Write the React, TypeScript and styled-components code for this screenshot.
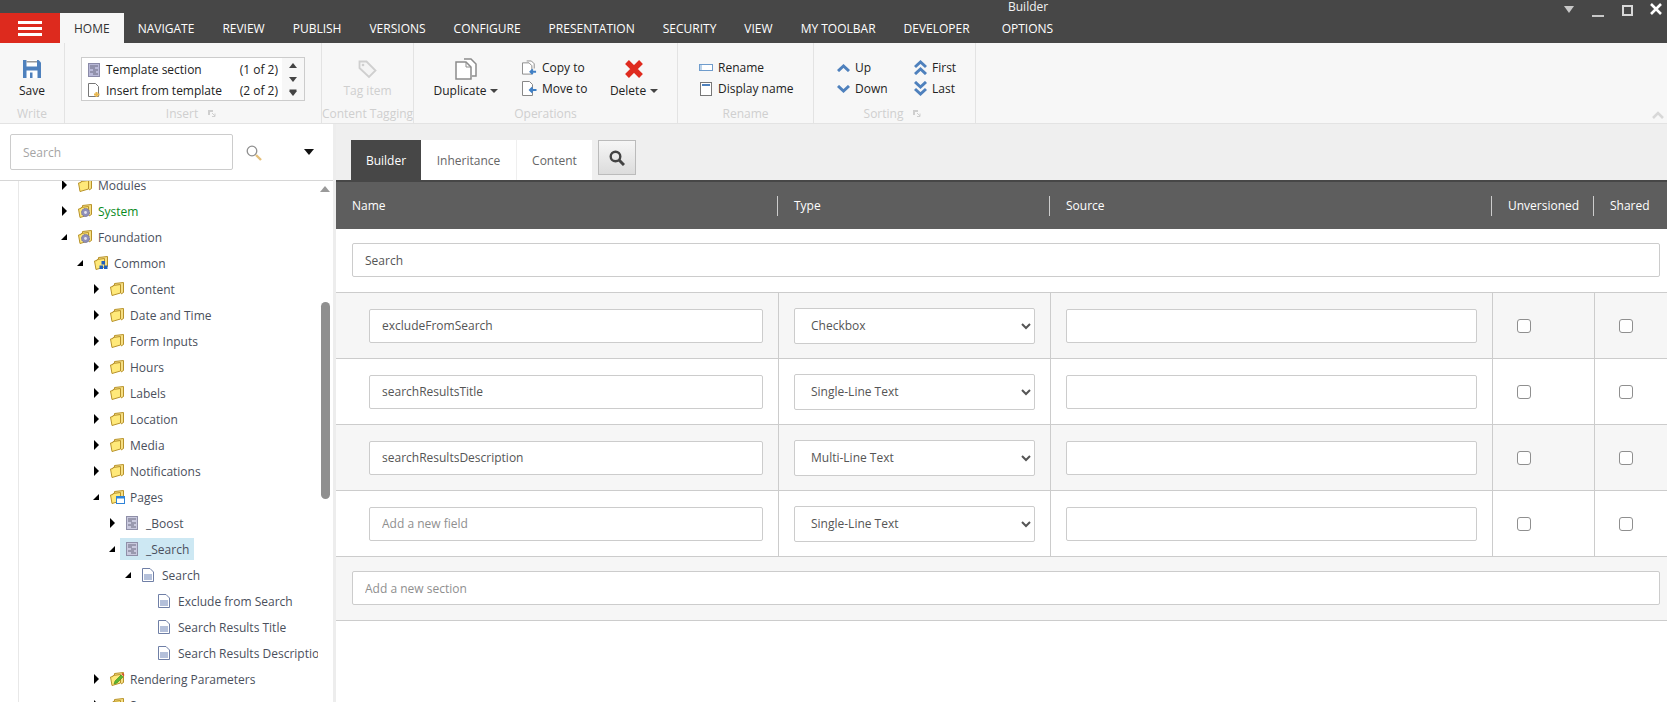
import React from "react";
import styled, { createGlobalStyle } from "styled-components";

const GlobalStyle = createGlobalStyle`
  html, body {
    margin: 0;
    padding: 0;
    height: 100%;
    overflow: hidden;
    background: #fff;
  }
  body {
    font-family: "Open Sans", "Liberation Sans", sans-serif;
    font-size: 12px;
    color: #333;
  }
  * { box-sizing: border-box; }
`;

/* ---------- icons ---------- */

const SaveIcon = () => (
  <svg width="18" height="18" viewBox="0 0 18 18">
    <path d="M0 0h15.500l2.500 2.500V18H0z" fill="#4f81bd" />
    <rect x="3.500" y="0" width="10.500" height="6.500" fill="#fff" />
    <rect x="3.500" y="1" width="10.500" height="1.500" fill="#9a9a9a" />
    <rect x="3.500" y="10.500" width="11" height="7.500" fill="#fff" />
    <rect x="7" y="12.500" width="2.500" height="5.500" fill="#4f81bd" />
  </svg>
);

const TemplateIcon = () => (
  <svg width="12" height="14" viewBox="0 0 12 14">
    <rect x="0.5" y="0.5" width="11" height="13" fill="#b9b9d8" stroke="#8a8aa8" />
    <path d="M2 3h8M2 5h5M5 7h5M2 9h6M5 11h5" stroke="#6b6b80" fill="none" />
  </svg>
);

const InsertIcon = () => (
  <svg width="12" height="15" viewBox="0 0 12 15">
    <path d="M0.5 0.5h7l3 3v10h-10z" fill="#fff" stroke="#777" />
    <path d="M8.500 9v5M6 11.500h5.500" stroke="#e8b64c" strokeWidth="2" />
  </svg>
);

const TagIcon = () => (
  <svg width="20" height="20" viewBox="0 0 20 20">
    <path d="M1.500 2.500h7l9 9-6.500 6.500-9.500-9z" fill="#f4f4f4" stroke="#cfcfcf" strokeWidth="1.800" />
    <circle cx="5" cy="6" r="1.300" fill="#cfcfcf" />
  </svg>
);

const DuplicateIcon = () => (
  <svg width="22" height="22" viewBox="0 0 22 22">
    <path d="M9 1h7l5 5v12h-4" fill="#fff" stroke="#8c8c8c" strokeWidth="1.500" />
    <path d="M1 4h10l5 5v12H1z" fill="#fff" stroke="#8c8c8c" strokeWidth="1.500" />
    <path d="M11 4v5h5" fill="none" stroke="#8c8c8c" />
  </svg>
);

const CopyToIcon = () => (
  <svg width="16" height="16" viewBox="0 0 16 16">
    <path d="M5 0.5h5l3 3v5" fill="#fff" stroke="#888" />
    <path d="M0.5 2.500h7l3 3v9h-10z" fill="#fff" stroke="#888" />
    <path d="M15 12H9M11.500 9.500L9 12l2.500 2.500" fill="none" stroke="#3f7fc4" strokeWidth="2" />
  </svg>
);

const MoveToIcon = () => (
  <svg width="15" height="15" viewBox="0 0 15 15">
    <path d="M0.5 0.5h7l3 3v11h-10z" fill="#fff" stroke="#888" />
    <path d="M14.500 9H8M10.500 6.500L8 9l2.500 2.500" fill="none" stroke="#3f7fc4" strokeWidth="2" />
  </svg>
);

const DeleteIcon = () => (
  <svg width="20" height="20" viewBox="0 0 20 20">
    <path d="M3 3l14 14M17 3L3 17" stroke="#df2b1f" strokeWidth="5.400" />
  </svg>
);

const RenameIcon = () => (
  <svg width="14" height="8" viewBox="0 0 14 8">
    <rect x="0.5" y="0.5" width="13" height="6" fill="#fff" stroke="#6f9ccc" />
    <rect x="1" y="1" width="2" height="5" fill="#bcd3ea" />
  </svg>
);

const DisplayNameIcon = () => (
  <svg width="12" height="14" viewBox="0 0 12 14">
    <rect x="0.5" y="0.5" width="11" height="13" fill="#fff" stroke="#777" />
    <rect x="2" y="2" width="8" height="2" fill="#4f81bd" />
  </svg>
);

const ChevronIcon = ({ down, double }: { down?: boolean; double?: boolean }) => (
  <svg width="13" height={double ? 15 : 8} viewBox={double ? "0 0 13 15" : "0 0 13 8"}>
    <g
      fill="none"
      stroke="#4f81bd"
      strokeWidth="3"
      transform={down ? `rotate(180 6.5 ${double ? 7.5 : 4})` : undefined}
    >
      <path d="M1 7l5.500-5L12 7" />
      {double && <path d="M1 14l5.500-5L12 14" />}
    </g>
  </svg>
);

const LauncherIcon = () => (
  <svg width="8" height="7" viewBox="0 0 8 7">
    <path d="M0 0h5v2H2v3H0z" fill="#cfcfcf" />
    <path d="M4 3l3 3M7 3.500V6.500H4" stroke="#cfcfcf" fill="none" />
  </svg>
);

const MagnifierIcon = () => (
  <svg width="16" height="16" viewBox="0 0 16 16">
    <circle cx="6" cy="6" r="4.800" fill="#fff" stroke="#8f8f8f" strokeWidth="1.300" />
    <path d="M10 10l5 5" stroke="#e5c07b" strokeWidth="2.400" />
  </svg>
);

const FindIcon = () => (
  <svg width="16" height="16" viewBox="0 0 16 16">
    <circle cx="6.500" cy="6.500" r="4.800" fill="none" stroke="#444" strokeWidth="2.400" />
    <path d="M10 10l5 5" stroke="#444" strokeWidth="3" />
  </svg>
);

type Badge = "none" | "gear" | "cubes" | "window" | "pencil";

const FolderIcon = ({ badge = "none" }: { badge?: Badge }) => (
  <svg width="15" height="14" viewBox="0 0 15 14">
    <path d="M4.500 3V1.500L13.500 0.500V10.500L11 12" fill="#f6df84" stroke="#b8922a" />
    <path d="M0.500 5L3 4.500V3.500L10.500 2.500V11L2 13.500Z" fill="#ffe97a" stroke="#b8922a" />
    {badge === "gear" && (
      <>
        <circle cx="7.500" cy="8.500" r="4" fill="#8f8fb8" stroke="#74749a" strokeDasharray="1.600 0.800" />
        <circle cx="7.500" cy="8.500" r="1.400" fill="#e4e4f0" />
      </>
    )}
    {badge === "cubes" && (
      <>
        <rect x="7.500" y="5" width="3.500" height="3.500" fill="#1f5fbf" />
        <rect x="5.500" y="9.500" width="3.500" height="3.500" fill="#1f5fbf" />
        <rect x="10" y="9.500" width="3.500" height="3.500" fill="#1f5fbf" />
      </>
    )}
    {badge === "window" && (
      <>
        <rect x="6.500" y="6.500" width="8" height="7" fill="#fff" stroke="#2f83d8" />
        <rect x="6.500" y="6.500" width="8" height="2" fill="#2f83d8" />
      </>
    )}
    {badge === "pencil" && (
      <>
        <path d="M4 12l1-3 6-6 2 2-6 6z" fill="#5cb531" stroke="#3c8a1c" strokeWidth="0.600" />
        <path d="M11.500 2l1-1 2 2-1 1z" fill="#d9402e" />
      </>
    )}
  </svg>
);

const DocIcon = () => (
  <svg width="12" height="14" viewBox="0 0 12 14">
    <path d="M0.5 0.5h7.500l3.500 3.500v9.500h-11z" fill="#fff" stroke="#6f7fa6" />
    <rect x="2" y="6" width="8" height="6" fill="#b4c0da" />
  </svg>
);

const TemplateTreeIcon = () => (
  <svg width="12" height="14" viewBox="0 0 12 14">
    <rect x="0.5" y="0.5" width="11" height="13" fill="#c9c9de" stroke="#8f8fa8" />
    <path d="M2 3h8M2 5h4M5 7h5M2 9h6M5 11h5" stroke="#6b6b80" fill="none" />
  </svg>
);

/* ---------- top bar ---------- */

const Page = styled.div`
  width: 1667px;
  height: 702px;
  display: flex;
  flex-direction: column;
  overflow: hidden;
`;

const TopBar = styled.header`
  height: 43px;
  flex: none;
  background: #474747;
  color: #fff;
`;

const TitleRow = styled.div`
  height: 13px;
  display: flex;
  align-items: flex-start;
  padding-left: 1008px;
`;

const WindowTitle = styled.span`
  line-height: 13px;
  color: #f2f2f2;
`;

const WindowControls = styled.div`
  margin-left: auto;
  display: flex;
  align-items: flex-start;
  padding: 3px 5px 0 0;
`;

const WindowButton = styled.svg<{ $gap?: number; $top?: number }>`
  display: block;
  margin-left: ${(p) => p.$gap ?? 0}px;
  margin-top: ${(p) => p.$top ?? 0}px;
`;

const TabRow = styled.nav`
  height: 30px;
  display: flex;
  align-items: stretch;
`;

const MenuButton = styled.button`
  width: 60px;
  border: 0;
  padding: 0;
  background: #dd2a1e;
  display: flex;
  flex-direction: column;
  align-items: center;
  justify-content: center;
  gap: 3px;
`;

const MenuLine = styled.span`
  display: block;
  width: 24px;
  height: 3px;
  background: #fff;
`;

const RibbonTab = styled.div<{ $active?: boolean }>`
  padding: 0 14px;
  display: flex;
  align-items: center;
  white-space: nowrap;
  background: ${(p) => (p.$active ? "#f7f7f7" : "transparent")};
  color: ${(p) => (p.$active ? "#333" : "#fff")};
`;

const OptionsTab = styled(RibbonTab)`
  margin-left: 4px;
`;

/* ---------- ribbon ---------- */

const Ribbon = styled.section`
  height: 81px;
  flex: none;
  display: flex;
  position: relative;
  background: #f7f7f7;
  border-bottom: 1px solid #e3e3e3;
`;

const Group = styled.div<{ $width: number }>`
  width: ${(p) => p.$width}px;
  flex: none;
  display: flex;
  flex-direction: column;
  border-right: 1px solid #e3e3e3;
`;

const GroupBody = styled.div<{ $pad?: number }>`
  height: 61px;
  flex: none;
  display: flex;
  padding-left: ${(p) => p.$pad ?? 0}px;
`;

const GroupLabel = styled.div<{ $launcher?: boolean }>`
  display: flex;
  justify-content: center;
  align-items: center;
  gap: 10px;
  height: 18px;
  padding-right: ${(p) => (p.$launcher ? 4 : 0)}px;
  color: #cfcfcf;
  white-space: nowrap;
`;

const LargeButton = styled.div<{ $muted?: boolean; $iconTop: number; $width: number }>`
  width: ${(p) => p.$width}px;
  flex: none;
  display: flex;
  flex-direction: column;
  align-items: center;
  padding-top: ${(p) => p.$iconTop}px;
  color: ${(p) => (p.$muted ? "#cfcfcf" : "#222")};
  white-space: nowrap;
`;

const LargeIcon = styled.div<{ $height?: number }>`
  height: ${(p) => p.$height ?? 22}px;
  display: flex;
  align-items: flex-start;
`;

const LargeText = styled.div`
  display: flex;
  align-items: center;
  gap: 4px;
  line-height: 16px;
  margin-top: 1px;
`;

const Caret = styled.span`
  display: inline-block;
  border-left: 4px solid transparent;
  border-right: 4px solid transparent;
  border-top: 4px solid #444;
`;

const Gallery = styled.div`
  margin: 14px 0 0 16px;
  width: 224px;
  height: 44px;
  display: flex;
  background: #fff;
  border: 1px solid #ccc;
`;

const GalleryList = styled.div`
  flex: 1;
  padding: 1px 0 0 6px;
`;

const GalleryItem = styled.div`
  height: 21px;
  display: flex;
  align-items: center;
  gap: 6px;
  color: #222;
`;

const GalleryCount = styled.span`
  margin-left: auto;
  padding-right: 4px;
`;

const GalleryArrows = styled.div`
  width: 22px;
  flex: none;
  background: #f7f7f7;
  display: flex;
  flex-direction: column;
  align-items: center;
  gap: 9px;
  padding-top: 5px;
`;

const SmallArrow = styled.span<{ $down?: boolean }>`
  display: block;
  border-left: 4px solid transparent;
  border-right: 4px solid transparent;
  ${(p) => (p.$down ? "border-top: 5px solid #444;" : "border-bottom: 5px solid #444;")}
`;

const MoreArrow = styled(SmallArrow)`
  box-shadow: 0 -2px 0 -0.500px #444;
`;

const SmallColumn = styled.div<{ $width?: number; $ml?: number }>`
  width: ${(p) => (p.$width ? `${p.$width}px` : "auto")};
  margin-left: ${(p) => p.$ml ?? 0}px;
  flex: none;
  padding-top: 14px;
`;

const SmallButton = styled.div<{ $iconWidth?: number }>`
  height: 21px;
  display: flex;
  align-items: center;
  gap: 5px;
  color: #222;
  white-space: nowrap;
  & > span:first-child {
    width: ${(p) => p.$iconWidth ?? 14}px;
    display: flex;
    justify-content: center;
    flex: none;
  }
`;

const CollapseRibbon = styled.svg`
  position: absolute;
  right: 3px;
  bottom: 4px;
`;

/* ---------- main ---------- */

const Main = styled.main`
  flex: 1;
  min-height: 0;
  display: flex;
`;

const LeftPanel = styled.aside`
  width: 333px;
  flex: none;
  display: flex;
  flex-direction: column;
  background: #fff;
`;

const TreeSearch = styled.div`
  height: 57px;
  flex: none;
  display: flex;
  align-items: flex-start;
  padding: 10px 0 0 10px;
  border-bottom: 1px solid #d6d6d6;
`;

const TreeSearchInput = styled.input`
  width: 223px;
  height: 36px;
  padding: 0 12px;
  border: 1px solid #ccc;
  border-radius: 2px;
  font: 12px "Open Sans", sans-serif;
  outline: none;
  &::placeholder { color: #a5a5a5; }
`;

const TreeSearchIcon = styled.span`
  margin: 11px 0 0 13px;
  line-height: 0;
`;

const TreeSearchCaret = styled.span`
  margin: 15px 0 0 42px;
  border-left: 5px solid transparent;
  border-right: 5px solid transparent;
  border-top: 6px solid #111;
`;

const TreeArea = styled.div`
  flex: 1;
  min-height: 0;
  display: flex;
  margin-left: 18px;
  border-left: 1px solid #e8e8e8;
`;

const TreeClip = styled.div`
  width: 299px;
  flex: none;
  overflow: hidden;
`;

const TreeList = styled.ul`
  list-style: none;
  margin: -9px 0 0;
  padding: 0;
  width: 400px;
`;

const TreeRow = styled.li<{ $level: number }>`
  height: 26px;
  display: flex;
  align-items: center;
  padding-left: ${(p) => 43 + p.$level * 16}px;
  white-space: nowrap;
`;

const Toggle = styled.span`
  width: 16px;
  flex: none;
  display: flex;
  align-items: center;
`;

const ClosedArrow = styled.span`
  border-top: 5px solid transparent;
  border-bottom: 5px solid transparent;
  border-left: 5px solid #000;
`;

const OpenArrow = styled.span`
  border-left: 6px solid transparent;
  border-bottom: 6px solid #000;
  margin-left: -1px;
`;

const NodeBody = styled.span<{ $selected?: boolean }>`
  height: 22px;
  display: flex;
  align-items: center;
  margin-left: -6px;
  padding: 0 5px 0 6px;
  background: ${(p) => (p.$selected ? "#cde8f3" : "transparent")};
`;

const NodeIcon = styled.span`
  width: 20px;
  flex: none;
  display: flex;
  align-items: center;
`;

const NodeText = styled.span<{ $color?: string }>`
  color: ${(p) => p.$color ?? "#4a4f5c"};
`;

const TreeScroll = styled.div`
  width: 14px;
  flex: none;
  display: flex;
  flex-direction: column;
  align-items: center;
  padding-top: 5px;
`;

const ScrollUp = styled.span`
  border-left: 5px solid transparent;
  border-right: 5px solid transparent;
  border-bottom: 6px solid #9a9a9a;
`;

const ScrollThumb = styled.div`
  margin-top: 110px;
  width: 9px;
  height: 197px;
  border-radius: 5px;
  background: #8f8f8f;
`;

const Splitter = styled.div`
  width: 3px;
  flex: none;
  background: #ededed;
`;

const RightPanel = styled.div`
  flex: 1;
  min-width: 0;
  display: flex;
  flex-direction: column;
  background: #fff;
`;

const EditorTabs = styled.div`
  height: 58px;
  flex: none;
  display: flex;
  align-items: flex-start;
  padding: 16px 0 0 15px;
  background: #efefef;
  border-bottom: 2px solid #474747;
`;

const EditorTab = styled.div<{ $active?: boolean; $width: number }>`
  width: ${(p) => p.$width}px;
  height: 40px;
  display: flex;
  align-items: center;
  justify-content: center;
  background: ${(p) => (p.$active ? "#474747" : "#fff")};
  color: ${(p) => (p.$active ? "#fff" : "#666")};
  margin-right: ${(p) => (p.$active ? 0 : 1)}px;
`;

const FindButton = styled.button`
  width: 38px;
  height: 35px;
  margin-left: 5px;
  padding: 0;
  display: flex;
  align-items: center;
  justify-content: center;
  border: 1px solid #bbb;
  background: linear-gradient(#f6f6f6, #dcdcdc);
`;

const Columns = "442px 272px 442px 102px 73px";

const HeaderRow = styled.div`
  height: 47px;
  flex: none;
  display: grid;
  grid-template-columns: ${Columns};
  align-items: center;
  background: #5e5e5e;
  color: #fff;
`;

const HeaderCell = styled.div<{ $divider?: boolean }>`
  height: 20px;
  display: flex;
  align-items: center;
  padding-left: 16px;
  border-left: 1px solid ${(p) => (p.$divider ? "#ccc" : "transparent")};
  margin-left: -1px;
`;

const SectionBar = styled.div<{ $muted?: boolean }>`
  flex: none;
  padding: 14px 7px 15px 16px;
  border-bottom: 1px solid #ccc;
  background: ${(p) => (p.$muted ? "#f6f6f6" : "#fff")};
`;

const fieldStyles = `
  display: block;
  border: 1px solid #ccc;
  border-radius: 2px;
  background: #fff;
  color: #555;
  font: 12px "Open Sans", sans-serif;
  outline: none;
`;

const WideInput = styled.input`
  ${fieldStyles}
  width: 100%;
  height: 34px;
  padding: 0 12px;
  &::placeholder { color: #8f8f8f; }
`;

const FieldRow = styled.div<{ $muted?: boolean }>`
  height: 66px;
  flex: none;
  display: grid;
  grid-template-columns: ${Columns};
  border-bottom: 1px solid #ccc;
  background: ${(p) => (p.$muted ? "#f6f6f6" : "#fff")};
`;

const FieldCell = styled.div<{ $pad?: number; $first?: boolean }>`
  display: flex;
  align-items: center;
  padding-left: ${(p) => p.$pad ?? 15}px;
  border-left: ${(p) => (p.$first ? "0" : "1px solid #ccc")};
`;

const NameInput = styled(WideInput)`
  width: 394px;
`;

const SourceInput = styled(WideInput)`
  width: 411px;
`;

const TypeSelect = styled.select`
  ${fieldStyles}
  width: 241px;
  height: 36px;
  padding: 0 12px;
`;

const FieldCheck = styled.input`
  appearance: none;
  display: block;
  width: 14px;
  height: 14px;
  margin: 0;
  background: #fff;
  border: 1.500px solid #8f8f8f;
  border-radius: 3px;
`;

const fieldTypes = ["Checkbox", "Single-Line Text", "Multi-Line Text"];

const tabs = [
  "NAVIGATE",
  "REVIEW",
  "PUBLISH",
  "VERSIONS",
  "CONFIGURE",
  "PRESENTATION",
  "SECURITY",
  "VIEW",
  "MY TOOLBAR",
  "DEVELOPER",
];

interface TreeNode {
  label: string;
  level: number;
  toggle?: "open" | "closed";
  icon: React.ReactNode;
  color?: string;
  selected?: boolean;
}

const treeNodes: TreeNode[] = [
  { label: "Modules", level: 0, toggle: "closed", icon: <FolderIcon /> },
  { label: "System", level: 0, toggle: "closed", icon: <FolderIcon badge="gear" />, color: "#0a8a1e" },
  { label: "Foundation", level: 0, toggle: "open", icon: <FolderIcon badge="gear" /> },
  { label: "Common", level: 1, toggle: "open", icon: <FolderIcon badge="cubes" /> },
  { label: "Content", level: 2, toggle: "closed", icon: <FolderIcon /> },
  { label: "Date and Time", level: 2, toggle: "closed", icon: <FolderIcon /> },
  { label: "Form Inputs", level: 2, toggle: "closed", icon: <FolderIcon /> },
  { label: "Hours", level: 2, toggle: "closed", icon: <FolderIcon /> },
  { label: "Labels", level: 2, toggle: "closed", icon: <FolderIcon /> },
  { label: "Location", level: 2, toggle: "closed", icon: <FolderIcon /> },
  { label: "Media", level: 2, toggle: "closed", icon: <FolderIcon /> },
  { label: "Notifications", level: 2, toggle: "closed", icon: <FolderIcon /> },
  { label: "Pages", level: 2, toggle: "open", icon: <FolderIcon badge="window" /> },
  { label: "_Boost", level: 3, toggle: "closed", icon: <TemplateTreeIcon /> },
  { label: "_Search", level: 3, toggle: "open", icon: <TemplateTreeIcon />, selected: true },
  { label: "Search", level: 4, toggle: "open", icon: <DocIcon /> },
  { label: "Exclude from Search", level: 5, icon: <DocIcon /> },
  { label: "Search Results Title", level: 5, icon: <DocIcon /> },
  { label: "Search Results Description", level: 5, icon: <DocIcon /> },
  { label: "Rendering Parameters", level: 2, toggle: "closed", icon: <FolderIcon badge="pencil" /> },
  { label: "Sources", level: 2, toggle: "closed", icon: <FolderIcon /> },
];

const fields = [
  { name: "excludeFromSearch", type: "Checkbox" },
  { name: "searchResultsTitle", type: "Single-Line Text" },
  { name: "searchResultsDescription", type: "Multi-Line Text" },
  { name: "", type: "Single-Line Text" },
];

const App = () => {
  return (
    <Page>
      <GlobalStyle />
      <TopBar>
        <TitleRow>
          <WindowTitle>Builder</WindowTitle>
          <WindowControls>
            <WindowButton $top={3} width="10" height="8" viewBox="0 0 10 8">
              <path d="M0 0h10L5 7z" fill="#c8c8c8" />
            </WindowButton>
            <WindowButton $gap={18} width="12" height="14" viewBox="0 0 12 14">
              <path d="M0 13h12" stroke="#c8c8c8" strokeWidth="2" />
            </WindowButton>
            <WindowButton $gap={18} $top={2} width="11" height="11" viewBox="0 0 11 11">
              <rect x="1" y="1" width="9" height="9" fill="none" stroke="#d8d8d8" strokeWidth="2" />
            </WindowButton>
            <WindowButton $gap={17} width="12" height="12" viewBox="0 0 12 12">
              <path d="M1 1l10 10M11 1L1 11" stroke="#fff" strokeWidth="2.600" />
            </WindowButton>
          </WindowControls>
        </TitleRow>
        <TabRow>
          <MenuButton aria-label="Menu">
            <MenuLine />
            <MenuLine />
            <MenuLine />
          </MenuButton>
          <RibbonTab $active>HOME</RibbonTab>
          {tabs.map((t) => (
            <RibbonTab key={t}>{t}</RibbonTab>
          ))}
          <OptionsTab>OPTIONS</OptionsTab>
        </TabRow>
      </TopBar>

      <Ribbon>
        <Group $width={65}>
          <GroupBody>
            <LargeButton $width={64} $iconTop={17}>
              <LargeIcon><SaveIcon /></LargeIcon>
              <LargeText>Save</LargeText>
            </LargeButton>
          </GroupBody>
          <GroupLabel>Write</GroupLabel>
        </Group>

        <Group $width={257}>
          <GroupBody>
            <Gallery>
              <GalleryList>
                <GalleryItem>
                  <TemplateIcon />
                  Template section
                  <GalleryCount>(1 of 2)</GalleryCount>
                </GalleryItem>
                <GalleryItem>
                  <InsertIcon />
                  Insert from template
                  <GalleryCount>(2 of 2)</GalleryCount>
                </GalleryItem>
              </GalleryList>
              <GalleryArrows>
                <SmallArrow />
                <SmallArrow $down />
                <MoreArrow $down />
              </GalleryArrows>
            </Gallery>
          </GroupBody>
          <GroupLabel $launcher>
            Insert <LauncherIcon />
          </GroupLabel>
        </Group>

        <Group $width={92}>
          <GroupBody>
            <LargeButton $width={91} $iconTop={16} $muted>
              <LargeIcon $height={23}><TagIcon /></LargeIcon>
              <LargeText>Tag item</LargeText>
            </LargeButton>
          </GroupBody>
          <GroupLabel>Content Tagging</GroupLabel>
        </Group>

        <Group $width={264}>
          <GroupBody $pad={21}>
            <LargeButton $width={62} $iconTop={15}>
              <LargeIcon $height={24}><DuplicateIcon /></LargeIcon>
              <LargeText>Duplicate <Caret /></LargeText>
            </LargeButton>
            <SmallColumn $width={89} $ml={25}>
              <SmallButton $iconWidth={15}>
                <span><CopyToIcon /></span>
                Copy to
              </SmallButton>
              <SmallButton $iconWidth={15}>
                <span><MoveToIcon /></span>
                Move to
              </SmallButton>
            </SmallColumn>
            <LargeButton $width={46} $iconTop={16}>
              <LargeIcon $height={23}><DeleteIcon /></LargeIcon>
              <LargeText>Delete <Caret /></LargeText>
            </LargeButton>
          </GroupBody>
          <GroupLabel>Operations</GroupLabel>
        </Group>

        <Group $width={136}>
          <GroupBody $pad={21}>
            <SmallColumn>
              <SmallButton>
                <span><RenameIcon /></span>
                Rename
              </SmallButton>
              <SmallButton>
                <span><DisplayNameIcon /></span>
                Display name
              </SmallButton>
            </SmallColumn>
          </GroupBody>
          <GroupLabel>Rename</GroupLabel>
        </Group>

        <Group $width={162}>
          <GroupBody $pad={22}>
            <SmallColumn $width={77}>
              <SmallButton>
                <span><ChevronIcon /></span>
                Up
              </SmallButton>
              <SmallButton>
                <span><ChevronIcon down /></span>
                Down
              </SmallButton>
            </SmallColumn>
            <SmallColumn>
              <SmallButton>
                <span><ChevronIcon double /></span>
                First
              </SmallButton>
              <SmallButton>
                <span><ChevronIcon down double /></span>
                Last
              </SmallButton>
            </SmallColumn>
          </GroupBody>
          <GroupLabel $launcher>
            Sorting <LauncherIcon />
          </GroupLabel>
        </Group>

        <CollapseRibbon width="12" height="8" viewBox="0 0 12 8">
          <path d="M1 7l5-5 5 5" fill="none" stroke="#d8d8d8" strokeWidth="2.600" />
        </CollapseRibbon>
      </Ribbon>

      <Main>
        <LeftPanel>
          <TreeSearch>
            <TreeSearchInput placeholder="Search" />
            <TreeSearchIcon><MagnifierIcon /></TreeSearchIcon>
            <TreeSearchCaret />
          </TreeSearch>
          <TreeArea>
            <TreeClip>
              <TreeList>
                {treeNodes.map((n) => (
                  <TreeRow key={n.label + n.level} $level={n.level}>
                    <Toggle>
                      {n.toggle === "closed" && <ClosedArrow />}
                      {n.toggle === "open" && <OpenArrow />}
                    </Toggle>
                    <NodeBody $selected={n.selected}>
                      <NodeIcon>{n.icon}</NodeIcon>
                      <NodeText $color={n.color}>{n.label}</NodeText>
                    </NodeBody>
                  </TreeRow>
                ))}
              </TreeList>
            </TreeClip>
            <TreeScroll>
              <ScrollUp />
              <ScrollThumb />
            </TreeScroll>
          </TreeArea>
        </LeftPanel>
        <Splitter />
        <RightPanel>
          <EditorTabs>
            <EditorTab $active $width={70}>Builder</EditorTab>
            <EditorTab $width={95}>Inheritance</EditorTab>
            <EditorTab $width={75}>Content</EditorTab>
            <FindButton aria-label="Find"><FindIcon /></FindButton>
          </EditorTabs>
          <HeaderRow>
            <HeaderCell>Name</HeaderCell>
            <HeaderCell $divider>Type</HeaderCell>
            <HeaderCell $divider>Source</HeaderCell>
            <HeaderCell $divider>Unversioned</HeaderCell>
            <HeaderCell $divider>Shared</HeaderCell>
          </HeaderRow>
          <SectionBar>
            <WideInput defaultValue="Search" />
          </SectionBar>
          {fields.map((f, i) => (
            <FieldRow key={i} $muted={i % 2 === 0}>
              <FieldCell $first $pad={33}>
                <NameInput defaultValue={f.name} placeholder="Add a new field" />
              </FieldCell>
              <FieldCell>
                <TypeSelect defaultValue={f.type}>
                  {fieldTypes.map((t) => (
                    <option key={t}>{t}</option>
                  ))}
                </TypeSelect>
              </FieldCell>
              <FieldCell>
                <SourceInput />
              </FieldCell>
              <FieldCell $pad={24}>
                <FieldCheck type="checkbox" />
              </FieldCell>
              <FieldCell $pad={24}>
                <FieldCheck type="checkbox" />
              </FieldCell>
            </FieldRow>
          ))}
          <SectionBar $muted>
            <WideInput placeholder="Add a new section" />
          </SectionBar>
        </RightPanel>
      </Main>
    </Page>
  );
};

export default App;
